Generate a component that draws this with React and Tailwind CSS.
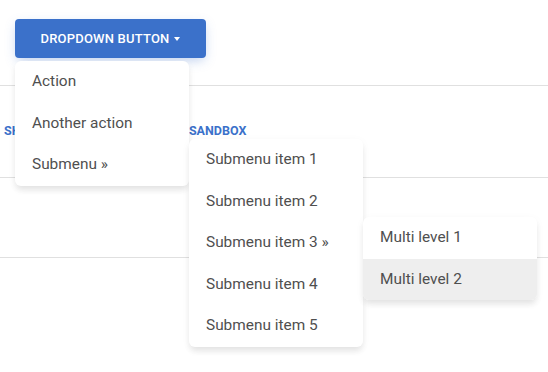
import React from "react";

const font = { fontFamily: "Roboto, 'Liberation Sans', sans-serif" };

function Item({ children, active }) {
  return (
    <div
      className={`pl-[17px] pr-4 py-2 text-[15.4px] leading-[25.6px] text-[#4f4f4f] whitespace-nowrap ${
        active ? "bg-[#eeeeee]" : ""
      }`}
    >
      {children}
    </div>
  );
}

function Menu({ className, children }) {
  return (
    <div
      className={`absolute w-[174px] bg-white rounded-[6px] overflow-hidden shadow-[0_5px_6px_-1px_rgba(0,0,0,0.09),0_2px_10px_0_rgba(0,0,0,0.04)] ${className}`}
    >
      {children}
    </div>
  );
}

export default function App() {
  return (
    <div className="relative w-[548px] h-[372px] bg-white overflow-hidden" style={font}>
      {/* page sections */}
      <div className="h-[86px] border-b border-[#e0e0e0] pt-[19px] pl-[15px]">
        <button className="flex items-center h-[39px] w-[191px] justify-center gap-[5px] rounded-[4px] bg-[#3b71ca] text-white text-[13px] font-medium tracking-[0.2px] shadow-[0_4px_12px_-2px_rgba(59,113,202,0.35)]">
          DROPDOWN BUTTON
          <span className="w-0 h-0 border-l-[3.5px] border-r-[3.5px] border-t-[4px] border-l-transparent border-r-transparent border-t-white" />
        </button>
      </div>
      <div className="h-[92px] border-b border-[#e0e0e0] flex items-center text-[12.5px] font-bold text-[#3b71ca]">
        <span className="pl-[4px]">SHOW CODE</span>
        <span className="ml-[69px]">EDIT IN SANDBOX</span>
      </div>
      <div className="h-[80px] border-b border-[#e0e0e0]" />

      {/* open dropdown */}
      <Menu className="left-[15px] top-[61px]">
        <Item>Action</Item>
        <Item>Another action</Item>
        <Item>Submenu &raquo;</Item>
      </Menu>
      <Menu className="left-[189px] top-[139px]">
        <Item>Submenu item 1</Item>
        <Item>Submenu item 2</Item>
        <Item>Submenu item 3 &raquo;</Item>
        <Item>Submenu item 4</Item>
        <Item>Submenu item 5</Item>
      </Menu>
      <Menu className="left-[363px] top-[217px]">
        <Item>Multi level 1</Item>
        <Item active>Multi level 2</Item>
      </Menu>
    </div>
  );
}
